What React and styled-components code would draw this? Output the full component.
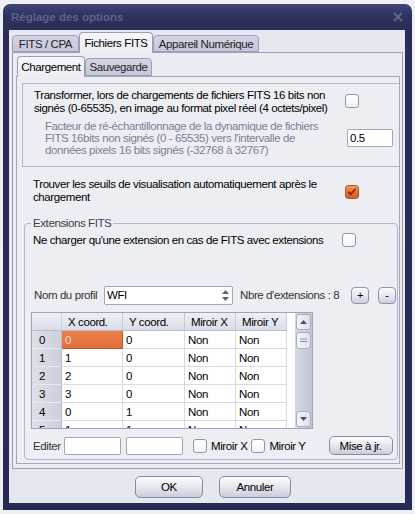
import React from "react";
import styled, { createGlobalStyle } from "styled-components";

const FONT = `"Liberation Sans", Arial, sans-serif`;

const GlobalStyle = createGlobalStyle`
  html, body { margin: 0; padding: 0; background: #eef0f4; }
  body { font-family: ${FONT}; font-size: 11.5px; letter-spacing: -0.4px; color: #000; }
  *, *::before, *::after { box-sizing: border-box; }
  #root { height: 514px; overflow: hidden; }
`;

const Page = styled.div`
  padding: 4px 0 0 3px;
`;

const Window = styled.div`
  width: 409px;
  height: 506px;
  background: linear-gradient(#40457a 0, #2e325e 12px, #292d57 26px, #272b54 100%);
  border-radius: 7px 7px 0 0;
  padding: 0 7px 7px 6px;
  display: flex;
  flex-direction: column;
`;

const TitleBar = styled.div`
  height: 26px;
  display: flex;
  align-items: center;
  justify-content: space-between;
  padding: 0 2px 0 2px;
`;

const Title = styled.span`
  font-family: "Liberation Sans", Arial, sans-serif;
  font-weight: bold;
  font-size: 11.5px;
  letter-spacing: 0;
  color: #5d628c;
`;

const Client = styled.div`
  flex: 1;
  background: #e5e8ef;
  padding: 2px 2px 5px 3px;
  display: flex;
  flex-direction: column;
`;

const TabRow = styled.div`
  display: flex;
  align-items: flex-end;
  height: 20px;
  padding-left: ${(p) => p.$indent || 0}px;
  position: relative;
  z-index: 1;
`;

const Tab = styled.div`
  width: ${(p) => p.$w}px;
  height: ${(p) => (p.$active ? 21 : p.$low)}px;
  margin-bottom: ${(p) => (p.$active ? -1 : 0)}px;
  border: 1px solid #9a9eb6;
  border-bottom: ${(p) => (p.$active ? "none" : "1px solid #9a9eb6")};
  border-radius: 4px 4px 0 0;
  background: ${(p) =>
    p.$active ? "linear-gradient(#f6f7fa, #eceef3)" : "linear-gradient(#d3d5e4, #c4c6da)"};
  color: ${(p) => (p.$active ? "#000" : "#222")};
  display: flex;
  align-items: center;
  justify-content: center;
  white-space: nowrap;
  padding-bottom: ${(p) => (p.$active ? 1 : 0)}px;
`;

const OuterPanel = styled.div`
  height: 417px;
  border: 1px solid #9ca0b6;
  background: #eaecf2;
  padding: 3px 2px 4px 3px;
  display: flex;
  flex-direction: column;
`;

const InnerPanel = styled.div`
  flex: 1;
  border: 1px solid #a3a7bc;
  background: #eceef3;
  display: flex;
  flex-direction: column;
  overflow: hidden;
`;

const Group = styled.div`
  margin: 6px 0 0 5px;
  border: 1px solid #b3b7c8;
  border-right: none;
  padding: 5px 0 10px 11px;
`;

const OptionRow = styled.div`
  display: grid;
  grid-template-columns: ${(p) => p.$text}px auto;
  align-items: center;
  margin-top: ${(p) => p.$mt || 0}px;
  padding-left: ${(p) => p.$pl || 0}px;
  line-height: ${(p) => p.$lh || 13}px;
  color: ${(p) => (p.$muted ? "#7b7f95" : "#000")};
  white-space: nowrap;
`;

const Box = styled.span`
  width: 14px;
  height: 14px;
  border: 1px solid ${(p) => (p.$checked ? "#b8592c" : "#9296ab")};
  border-radius: 3px;
  background: ${(p) =>
    p.$checked ? "linear-gradient(#f39762, #df6a33 60%, #d45f2a)" : "linear-gradient(#ffffff, #f3f4f8)"};
  display: inline-flex;
  align-items: center;
  justify-content: center;
  flex: none;
  margin-top: ${(p) => p.$mt || 0}px;
`;

const TextInput = styled.div`
  width: ${(p) => p.$w}px;
  height: 18px;
  background: #fff;
  color: #000;
  border: 1px solid #a2a6bb;
  border-radius: 2px;
  padding: 0 2px;
  line-height: 16px;
  flex: none;
`;

const Fieldset = styled.fieldset`
  margin: 13px 1px 0 7px;
  border: 1px solid #b3b7c8;
  border-radius: 4px;
  padding: 3px 0 4px 6px;
  min-width: 0;
`;

const Legend = styled.legend`
  padding: 0 2px;
  line-height: 13px;
  color: #3c3e4c;
`;

const ProfileRow = styled.div`
  display: flex;
  align-items: center;
  height: 18px;
  margin-top: 39px;
  padding-left: 3px;
  white-space: nowrap;
`;

const Label = styled.span`
  width: ${(p) => (p.$w ? `${p.$w}px` : "auto")};
  margin-left: ${(p) => p.$ml || 0}px;
  color: ${(p) => p.$color || "#000"};
  flex: none;
`;

const Combo = styled.div`
  width: 129px;
  height: 19px;
  background: #fff;
  border: 1px solid #a2a6bb;
  border-radius: 2px;
  display: flex;
  align-items: center;
  padding-left: 2px;
`;

const ComboText = styled.span`
  flex: 1;
`;

const Spin = styled.div`
  width: 14px;
  height: 100%;
  display: flex;
  align-items: center;
  justify-content: center;
`;

const SmallBtn = styled.div`
  width: 18px;
  height: 17px;
  margin-left: ${(p) => p.$ml || 0}px;
  border: 1px solid #8f94ab;
  border-radius: 4px;
  background: linear-gradient(#fbfbfd, #e4e6ee 55%, #cdd0dd);
  display: flex;
  align-items: center;
  justify-content: center;
  font-size: 11px;
  line-height: 1;
  flex: none;
`;

const GridBox = styled.div`
  margin: 8px 0 0 0;
  width: 282px;
  height: 117px;
  border: 1px solid #9fa3b9;
  background: #fff;
  display: flex;
  overflow: hidden;
`;

const GridBody = styled.div`
  width: 263px;
  overflow: hidden;
  display: grid;
  grid-template-columns: 30px 61px 62px 51px 51px;
  grid-auto-rows: 18px;
  align-content: start;
  justify-content: start;
`;

const HeadCell = styled.div`
  background: linear-gradient(#eef0f5, #dadde7);
  border-right: 1px solid ${(p) => (p.$corner ? "#cdd0dc" : "#c6c9d6")};
  border-bottom: 1px solid #b8bccc;
  padding-left: 6px;
  display: flex;
  align-items: center;
  white-space: nowrap;
`;

const RowHead = styled.div`
  background: linear-gradient(90deg, #dde0e9, #ccd0dc);
  border-bottom: 1px solid #e6e8ef;
  border-right: 1px solid #b8bccc;
  padding-left: 7px;
  display: flex;
  align-items: center;
`;

const Cell = styled.div`
  background: ${(p) => (p.$sel ? "linear-gradient(#ec8048, #e26f39)" : "#fff")};
  color: ${(p) => (p.$sel ? "#fbd9c4" : "#000")};
  border-right: 1px solid ${(p) => (p.$sel ? "#c05a2a" : "#d9dbe2")};
  border-bottom: 1px solid ${(p) => (p.$sel ? "#c05a2a" : "#d9dbe2")};
  padding-left: 3px;
  display: flex;
  align-items: center;
`;

const VScroll = styled.div`
  width: 17px;
  display: flex;
  flex-direction: column;
  gap: 2px;
  padding: 1px 0 1px 0;
  background: linear-gradient(90deg, #d6d9e5, #c2c5d6);
  margin-left: auto;
`;

const ScrollBtn = styled.div`
  height: ${(p) => p.$h || 16}px;
  margin: 0 1px;
  border: 1px solid #a8acc0;
  border-radius: 3px;
  background: linear-gradient(90deg, #f6f7fa, #dcdfe9);
  display: flex;
  align-items: center;
  justify-content: center;
`;

const Fill = styled.div`
  flex: 1;
`;

const EditRow = styled.div`
  display: flex;
  align-items: center;
  height: 19px;
  margin-top: 7px;
  padding-left: 2px;
  white-space: nowrap;
`;

const Button = styled.div`
  width: ${(p) => p.$w}px;
  height: ${(p) => p.$h || 22}px;
  margin-left: ${(p) => p.$ml || 0}px;
  border: 1px solid #878ca6;
  border-radius: 5px;
  background: linear-gradient(#fcfcfd, #e8e9ef 45%, #d3d6e1 85%, #c9ccd9);
  display: flex;
  align-items: center;
  justify-content: center;
  flex: none;
`;

const ButtonBar = styled.div`
  display: flex;
  margin-top: 7px;
  padding-left: 123px;
  height: 22px;
`;

const Check = ({ checked, mt }) => (
  <Box $checked={checked} $mt={mt}>
    {checked && (
      <svg width="10" height="9" viewBox="0 0 10 9">
        <path d="M1.5 4.8 L3.8 7.2 L8.5 1.8" fill="none" stroke="#7b2a0a" strokeWidth="1.7" />
      </svg>
    )}
  </Box>
);

const Tri = ({ down }) => (
  <svg width="7" height="4" viewBox="0 0 7 4">
    <path d={down ? "M0 0 L7 0 L3.5 4 Z" : "M0 4 L7 4 L3.5 0 Z"} fill="#4d5168" />
  </svg>
);

const rows = [
  ["0", "0", "0", "Non", "Non"],
  ["1", "1", "0", "Non", "Non"],
  ["2", "2", "0", "Non", "Non"],
  ["3", "3", "0", "Non", "Non"],
  ["4", "0", "1", "Non", "Non"],
  ["5", "1", "1", "Non", "Non"],
];

export default function App() {
  return (
    <>
      <GlobalStyle />
      <Page>
        <Window>
          <TitleBar>
            <Title>Réglage des options</Title>
            <svg width="10" height="10" viewBox="0 0 10 10">
              <path d="M1 1 L9 9 M9 1 L1 9" stroke="#5f648e" strokeWidth="2.2" />
            </svg>
          </TitleBar>
          <Client>
            <TabRow>
              <Tab $w={67} $low={17}>FITS / CPA</Tab>
              <Tab $w={74} $active>Fichiers FITS</Tab>
              <Tab $w={106} $low={17}>Appareil Numérique</Tab>
            </TabRow>
            <OuterPanel>
              <TabRow $indent={1}>
                <Tab $w={68} $active>Chargement</Tab>
                <Tab $w={67} $low={18}>Sauvegarde</Tab>
              </TabRow>
              <InnerPanel>
                <Group>
                  <OptionRow $text={311}>
                    <span>
                      Transformer, lors de chargements de fichiers FITS 16 bits non
                      <br />
                      signés (0-65535), en image au format pixel réel (4 octets/pixel)
                    </span>
                    <Check mt={-3} />
                  </OptionRow>
                  <OptionRow $text={302} $mt={5} $pl={11} $lh={12} $muted>
                    <span>
                      Facteur de ré-échantillonnage de la dynamique de fichiers
                      <br />
                      FITS 16bits non signés (0 - 65535) vers l'intervalle de
                      <br />
                      données pixels 16 bits signés (-32768 à 32767)
                    </span>
                    <TextInput $w={46}>0.5</TextInput>
                  </OptionRow>
                </Group>
                <OptionRow $text={312} $mt={11} $pl={16}>
                  <span>
                    Trouver les seuils de visualisation automatiquement après le
                    <br />
                    chargement
                  </span>
                  <Check checked mt={1} />
                </OptionRow>
                <Fieldset>
                  <Legend>Extensions FITS</Legend>
                  <OptionRow $text={309} $pl={2} $lh={14}>
                    <span>Ne charger qu'une extension en cas de FITS avec extensions</span>
                    <Check />
                  </OptionRow>
                  <ProfileRow>
                    <Label $w={70} $color="#333">Nom du profil</Label>
                    <Combo>
                      <ComboText>WFI</ComboText>
                      <Spin>
                        <svg width="7" height="11" viewBox="0 0 7 11">
                          <path d="M0 4 L7 4 L3.5 0 Z M0 7 L7 7 L3.5 11 Z" fill="#5d6178" />
                        </svg>
                      </Spin>
                    </Combo>
                    <Label $w={111} $ml={7} $color="#333">Nbre d'extensions : 8</Label>
                    <SmallBtn>+</SmallBtn>
                    <SmallBtn $ml={9}>-</SmallBtn>
                  </ProfileRow>
                  <GridBox>
                    <GridBody>
                      <HeadCell $corner />
                      <HeadCell>X coord.</HeadCell>
                      <HeadCell>Y coord.</HeadCell>
                      <HeadCell>Miroir X</HeadCell>
                      <HeadCell>Miroir Y</HeadCell>
                      {rows.map((r, i) => (
                        <React.Fragment key={i}>
                          <RowHead>{r[0]}</RowHead>
                          <Cell $sel={i === 0}>{r[1]}</Cell>
                          <Cell>{r[2]}</Cell>
                          <Cell>{r[3]}</Cell>
                          <Cell>{r[4]}</Cell>
                        </React.Fragment>
                      ))}
                    </GridBody>
                    <VScroll>
                      <ScrollBtn>
                        <Tri />
                      </ScrollBtn>
                      <ScrollBtn $h={17}>
                        <svg width="7" height="5" viewBox="0 0 7 5">
                          <path d="M0 1 H7 M0 3.5 H7" stroke="#8a8ea4" strokeWidth="1" />
                        </svg>
                      </ScrollBtn>
                      <Fill />
                      <ScrollBtn>
                        <Tri down />
                      </ScrollBtn>
                    </VScroll>
                  </GridBox>
                  <EditRow>
                    <Label $w={31} $color="#333">Editer</Label>
                    <TextInput $w={57} />
                    <Label $ml={5} />
                    <TextInput $w={57} />
                    <Label $ml={10} />
                    <Check />
                    <Label $ml={4}>Miroir X</Label>
                    <Label $ml={4} />
                    <Check />
                    <Label $ml={4}>Miroir Y</Label>
                    <Button $w={64} $h={19} $ml={23}>Mise à jr.</Button>
                  </EditRow>
                </Fieldset>
              </InnerPanel>
            </OuterPanel>
            <ButtonBar>
              <Button $w={68}>OK</Button>
              <Button $w={72} $ml={16}>Annuler</Button>
            </ButtonBar>
          </Client>
        </Window>
      </Page>
    </>
  );
}
